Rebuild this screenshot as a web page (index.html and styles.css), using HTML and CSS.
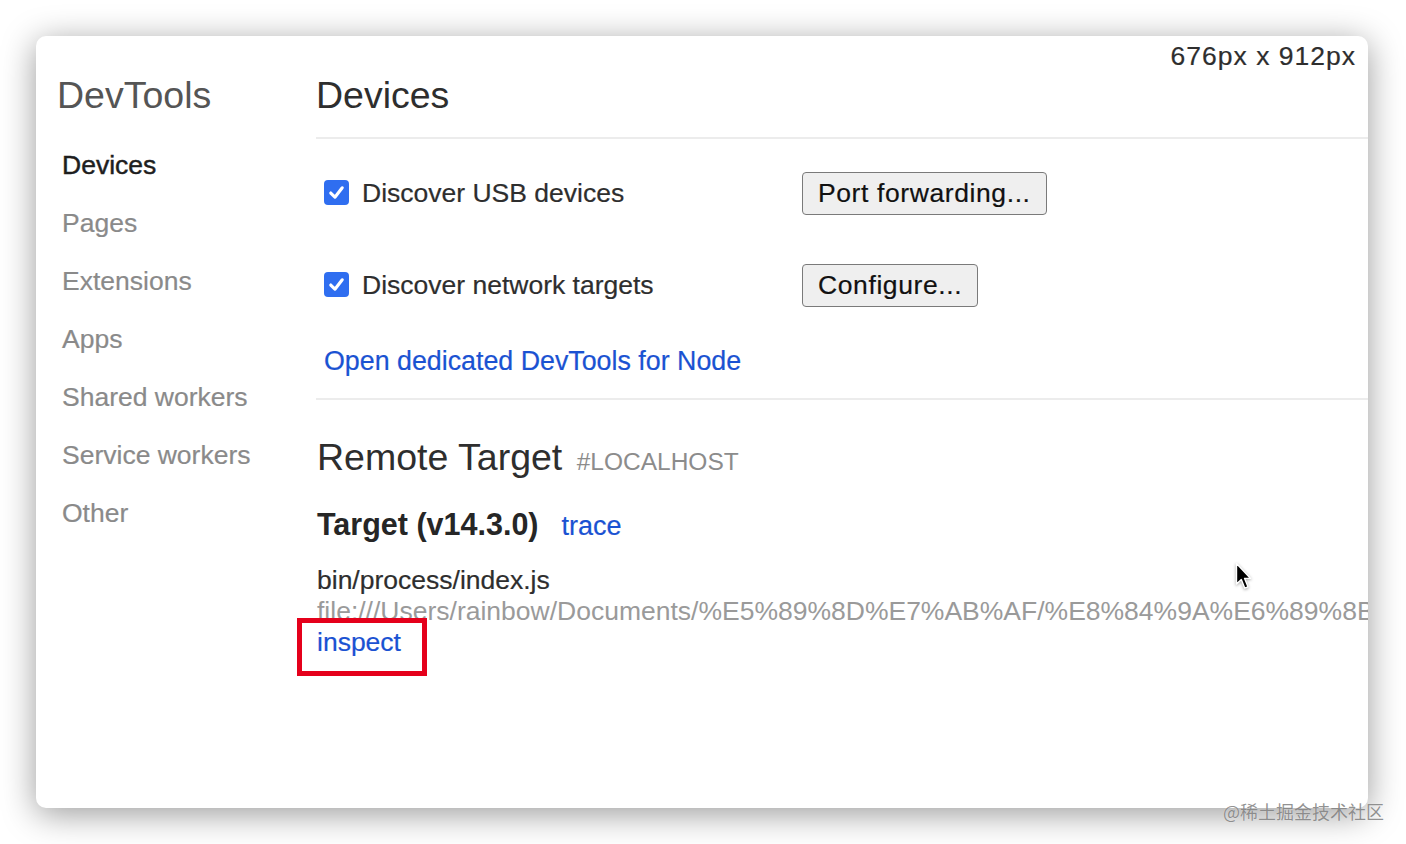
FILE: index.html
```html
<!DOCTYPE html>
<html lang="en">
<head>
<meta charset="utf-8">
<title>DevTools - Devices</title>
<link rel="stylesheet" href="styles.css">
</head>
<body>
<div class="window">
  <div class="size-label">676px x 912px</div>
  <aside class="sidebar">
    <h1 class="app-title">DevTools</h1>
    <ul class="nav">
      <li class="nav-item active">Devices</li>
      <li class="nav-item">Pages</li>
      <li class="nav-item">Extensions</li>
      <li class="nav-item">Apps</li>
      <li class="nav-item">Shared workers</li>
      <li class="nav-item">Service workers</li>
      <li class="nav-item">Other</li>
    </ul>
  </aside>
  <main class="content">
    <header class="page-header">
      <h2 class="page-title">Devices</h2>
    </header>
    <section class="settings">
      <div class="setting-row">
        <label class="check-label">
          <span class="checkbox"><svg viewBox="0 0 24 24" width="25" height="25"><path d="M6.5 12.5 L10.5 16.5 L17.5 7.5" fill="none" stroke="#fff" stroke-width="3" stroke-linecap="round" stroke-linejoin="round"/></svg></span>
          <span class="check-text">Discover USB devices</span>
        </label>
        <button class="btn">Port forwarding...</button>
      </div>
      <div class="setting-row second">
        <label class="check-label">
          <span class="checkbox"><svg viewBox="0 0 24 24" width="25" height="25"><path d="M6.5 12.5 L10.5 16.5 L17.5 7.5" fill="none" stroke="#fff" stroke-width="3" stroke-linecap="round" stroke-linejoin="round"/></svg></span>
          <span class="check-text">Discover network targets</span>
        </label>
        <button class="btn">Configure...</button>
      </div>
      <a class="link node-link">Open dedicated DevTools for Node</a>
    </section>
    <section class="remote">
      <h3 class="remote-title">Remote Target <span class="remote-host">#LOCALHOST</span></h3>
      <div class="target-head"><span class="target-name">Target (v14.3.0)</span><a class="link trace">trace</a></div>
      <div class="target-file">bin/process/index.js</div>
      <div class="target-url">file:///Users/rainbow/Documents/%E5%89%8D%E7%AB%AF/%E8%84%9A%E6%89%8B%E6%9E%B6/bin/process/index.js</div>
      <div class="target-actions"><a class="link inspect">inspect<span class="highlight"></span></a></div>
    </section>
  </main>
  <svg class="cursor" viewBox="0 0 17 29" width="17" height="29"><path d="M1.5 1.5 L1.5 22 L6.3 17.6 L9.8 26.2 L13 24.8 L9.6 16.4 L15.6 16.4 Z" fill="#000" stroke="#fff" stroke-width="1.4" stroke-linejoin="round"/></svg>
</div>
<div class="watermark">@稀土掘金技术社区</div>
</body>
</html>
```

FILE: styles.css
```css
html, body {
  margin: 0;
  padding: 0;
  background: #ffffff;
}

body {
  width: 1406px;
  height: 844px;
  overflow: hidden;
  position: relative;
  font-family: "Liberation Sans", Arial, sans-serif;
  color: #333;
}

.window {
  position: relative;
  margin: 36px 0 0 36px;
  width: 1332px;
  height: 772px;
  background: #fff;
  border-radius: 10px;
  box-shadow: 0 6px 34px rgba(0, 0, 0, 0.4);
  display: flex;
  overflow: hidden;
}

.size-label {
  position: absolute;
  top: 5px;
  right: 12px;
  font-size: 26.5px;
  line-height: 30px;
  letter-spacing: 1px;
  color: #2e2e2e;
  -webkit-text-stroke: 0.2px #2e2e2e;
}

.sidebar {
  width: 259px;
  flex: none;
  padding: 37px 0 0 21px;
}

.app-title {
  margin: 0;
  font-size: 37.5px;
  line-height: 44px;
  font-weight: normal;
  color: #555;
}

.nav {
  list-style: none;
  margin: 19px 0 0 5px;
  padding: 0;
}

.nav-item {
  font-size: 26.5px;
  line-height: 58px;
  color: #8a8a8a;
  -webkit-text-stroke: 0.2px #8a8a8a;
}

.nav-item.active {
  color: #1e1e1e;
  -webkit-text-stroke: 0.45px #1e1e1e;
}

.content {
  flex: 1;
  min-width: 0;
  padding-top: 37px;
}

.page-header {
  padding-bottom: 20px;
  border-bottom: 2px solid #ececec;
}

.page-title {
  margin: 0;
  font-size: 37.5px;
  line-height: 44px;
  font-weight: normal;
  color: #2e2e2e;
}

.settings {
  padding: 33px 0 0 8px;
  border-bottom: 2px solid #ececec;
}

.setting-row {
  display: grid;
  grid-template-columns: 478px auto;
  align-items: center;
  height: 43px;
}

.setting-row.second {
  margin-top: 49px;
}

.check-label {
  display: flex;
  align-items: center;
  gap: 13px;
}

.checkbox {
  width: 25px;
  height: 25px;
  border-radius: 4px;
  background: #2f6ef0;
  display: flex;
  margin-top: -3px;
}

.check-text {
  font-size: 26.5px;
  line-height: 43px;
  color: #2e2e2e;
  -webkit-text-stroke: 0.2px #2e2e2e;
}

.btn {
  justify-self: start;
  height: 43px;
  padding: 0 15px;
  font-family: "Liberation Sans", Arial, sans-serif;
  font-size: 26.5px;
  letter-spacing: 0.6px;
  color: #111;
  -webkit-text-stroke: 0.2px #111;
  background: #efefef;
  border: 1.5px solid #7a7a7a;
  border-radius: 4px;
}

.link {
  color: #1a52d2;
  text-decoration: none;
  -webkit-text-stroke: 0.2px #1a52d2;
}

.node-link {
  display: block;
  margin-top: 38px;
  margin-bottom: 21px;
  font-size: 26.8px;
  line-height: 32px;
}

.remote {
  padding: 35px 0 0 1px;
}

.remote-title {
  margin: 0;
  font-size: 37.5px;
  line-height: 44px;
  font-weight: normal;
  color: #2e2e2e;
}

.remote-host {
  margin-left: 4px;
  font-size: 24.5px;
  color: #8c8c8c;
}

.target-head {
  margin-top: 22px;
  line-height: 36px;
  display: flex;
  align-items: baseline;
}

.target-name {
  font-size: 30.5px;
  font-weight: bold;
  color: #262626;
}

.trace {
  margin-left: 23px;
  font-size: 27px;
}

.target-file {
  margin-top: 20px;
  font-size: 26.5px;
  line-height: 32px;
  color: #2e2e2e;
  -webkit-text-stroke: 0.2px #2e2e2e;
  white-space: nowrap;
}

.target-url {
  font-size: 26.5px;
  line-height: 30px;
  color: #9a9a9a;
  white-space: nowrap;
}

.target-actions {
  font-size: 26.5px;
  line-height: 32px;
}

.inspect {
  position: relative;
}

.highlight {
  position: absolute;
  left: -20px;
  top: -9px;
  width: 130px;
  height: 58px;
  box-sizing: border-box;
  border: 5px solid #e5001b;
}

.cursor {
  position: absolute;
  left: 1199px;
  top: 526px;
  filter: drop-shadow(0 1px 1.5px rgba(0, 0, 0, 0.35));
}

.watermark {
  position: absolute;
  left: 1223px;
  top: 799px;
  font-family: "Noto Sans CJK SC", sans-serif;
  font-size: 18px;
  line-height: 24px;
  color: rgba(110, 110, 110, 0.75);
  text-shadow: 0 0 1px rgba(255, 255, 255, 0.6);
}
```
